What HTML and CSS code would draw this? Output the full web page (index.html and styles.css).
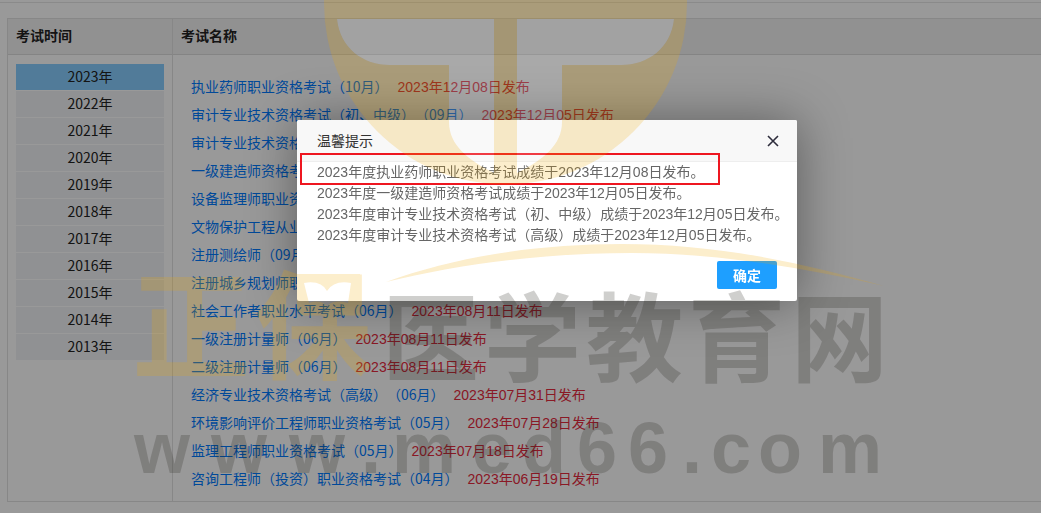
FILE: index.html
```html
<!DOCTYPE html>
<html lang="zh-CN">
<head>
<meta charset="utf-8">
<title>考试成绩发布</title>
<link rel="stylesheet" href="styles.css">
</head>
<body>
<main class="page">
  <table class="exams">
    <thead>
      <tr><th class="col-year" scope="col">考试时间</th><th scope="col">考试名称</th></tr>
    </thead>
    <tbody>
      <tr>
        <td class="year-cell">
          <nav class="years">
            <a class="year active" href="#2023">2023年</a>
            <a class="year" href="#2022">2022年</a>
            <a class="year" href="#2021">2021年</a>
            <a class="year" href="#2020">2020年</a>
            <a class="year" href="#2019">2019年</a>
            <a class="year" href="#2018">2018年</a>
            <a class="year" href="#2017">2017年</a>
            <a class="year" href="#2016">2016年</a>
            <a class="year" href="#2015">2015年</a>
            <a class="year" href="#2014">2014年</a>
            <a class="year" href="#2013">2013年</a>
          </nav>
        </td>
        <td class="name-cell">
          <ul class="names">
            <li><a href="#e1">执业药师职业资格考试（10月）</a><span class="date">2023年12月08日发布</span></li>
            <li><a href="#e2">审计专业技术资格考试（初、中级）（09月）</a><span class="date">2023年12月05日发布</span></li>
            <li><a href="#e3">审计专业技术资格考试（高级）（09月）</a></li>
            <li><a href="#e4">一级建造师资格考试（09月）</a></li>
            <li><a href="#e5">设备监理师职业资格考试（09月）</a></li>
            <li><a href="#e6">文物保护工程从业资格考试（09月）</a></li>
            <li><a href="#e7">注册测绘师（09月）</a></li>
            <li><a href="#e8">注册城乡规划师职业资格考试（09月）</a></li>
            <li><a href="#e9">社会工作者职业水平考试（06月）</a><span class="date">2023年08月11日发布</span></li>
            <li><a href="#e10">一级注册计量师（06月）</a><span class="date">2023年08月11日发布</span></li>
            <li><a href="#e11">二级注册计量师（06月）</a><span class="date">2023年08月11日发布</span></li>
            <li><a href="#e12">经济专业技术资格考试（高级）（06月）</a><span class="date">2023年07月31日发布</span></li>
            <li><a href="#e13">环境影响评价工程师职业资格考试（05月）</a><span class="date">2023年07月28日发布</span></li>
            <li><a href="#e14">监理工程师职业资格考试（05月）</a><span class="date">2023年07月18日发布</span></li>
            <li><a href="#e15">咨询工程师（投资）职业资格考试（04月）</a><span class="date">2023年06月19日发布</span></li>
          </ul>
        </td>
      </tr>
    </tbody>
  </table>
</main>

<div class="shade"></div>

<section class="dialog" role="dialog" aria-labelledby="dialog-title">
  <header class="dialog-head">
    <h2 class="dialog-title" id="dialog-title">温馨提示</h2>
    <button class="close" type="button" aria-label="关闭">
      <svg width="12" height="12" viewBox="0 0 12 12"><path d="M1 1l10 10M11 1L1 11" stroke="#2e2d3c" stroke-width="1.6" fill="none"/></svg>
    </button>
  </header>
  <div class="dialog-body">
    <p>2023年度执业药师职业资格考试成绩于2023年12月08日发布。</p>
    <p>2023年度一级建造师资格考试成绩于2023年12月05日发布。</p>
    <p>2023年度审计专业技术资格考试（初、中级）成绩于2023年12月05日发布。</p>
    <p>2023年度审计专业技术资格考试（高级）成绩于2023年12月05日发布。</p>
  </div>
  <footer class="dialog-foot"><button class="confirm" type="button">确定</button></footer>
  <div class="highlight"></div>
</section>

<svg class="watermark" width="1041" height="513" viewBox="0 0 1041 513">
  <defs>
    <mask id="book" maskUnits="userSpaceOnUse" x="0" y="0" width="1041" height="513">
      <rect width="1041" height="513" fill="#fff"/>
      <path d="M304 283Q321 280 327 291Q334 280 351 283L348 303Q334 299 327 306Q320 299 309 303Z" fill="#000"/>
    </mask>
  </defs>
  <g class="wm-light">
    <path d="M337 19H494V173C468 160 449 145 449 122V65H390C363 65 340 48 337 19Z"/>
    <path d="M674 19H517V173C543 160 562 145 562 122V65H621C648 65 671 48 674 19Z"/>
  </g>
  <g class="wm-gold">
    <path fill-rule="evenodd" d="M324 3A181.500 181.500 0 0 0 687 3V-2H324ZM337 19H494V173C468 160 449 145 449 122V65H390C363 65 340 48 337 19ZM674 19H517V173C543 160 562 145 562 122V65H621C648 65 671 48 674 19Z"/>
    <path d="M386 282C455 257 535 244 622 244C715 244 800 262 884 286C800 267 715 253 632 253C540 253 455 265 386 282Z"/>
    <g mask="url(#book)">
      <text class="wm-brand" x="132 254" y="370">正保</text>
      <path d="M297 274H360V312H297Z"/>
    </g>
  </g>
  <g class="wm-dark">
    <text class="wm-name" x="382 484 586 688 791" y="374">医学教育网</text>
    <text class="wm-site" x="134 211 289 361 392 472 522 577 628 682 711 758 818" y="473">www.med66.com</text>
  </g>
</svg>
</body>
</html>
```
FILE: styles.css
```css
* { box-sizing: border-box; }
body {
  margin: 0;
  overflow: hidden;
  background: #fff;
  color: #222;
  font: 14px/20px "Liberation Sans", "Noto Sans CJK SC", sans-serif;
  text-spacing-trim: space-all;
}
a { text-decoration: none; }
.page {
  margin-top: 2px;
  border-top: 1px solid #e6e6e6;
  padding: 15px 0 11px 7px;
}
.exams {
  width: 100%;
  border: 1px solid #e2e2e2;
  border-right: 0;
  border-spacing: 0;
  table-layout: fixed;
}
.exams th {
  height: 36px;
  padding: 0 8px 2px;
  background: #f2f2f2;
  border-bottom: 1px solid #ddd;
  text-align: left;
  font-weight: 700;
}
.exams .col-year { width: 164px; }
.exams th + th, .exams td + td { border-left: 1px solid #e2e2e2; }
.exams td { padding: 0; vertical-align: top; }
.exams .year-cell { padding: 9px 8px; }
.exams .name-cell { padding: 18px 18px 8px; }
.years { display: flex; flex-direction: column; gap: 1px; }
.year {
  padding-bottom: 2px;
  background: #f0f2f5;
  color: #222;
  font-family: "Noto Sans CJK SC", sans-serif;
  line-height: 24px;
  text-align: center;
}
.year.active { background: #87ceff; }
.names { margin: 0; padding: 0; list-style: none; }
.names li { display: flex; gap: 9px; height: 28px; line-height: 28px; white-space: nowrap; }
.names a { color: #007bff; font-family: "Noto Sans CJK SC", sans-serif; line-height: 26px; }
.date { color: #e62a3e; }
.shade { position: fixed; inset: 0; background: rgba(0, 0, 0, .4); }
.dialog {
  position: absolute;
  top: 120px;
  left: 297px;
  width: 500px;
  background: #fff;
  border-radius: 2px;
  box-shadow: 1px 1px 50px rgba(0, 0, 0, .4);
}
.dialog-head {
  display: flex;
  align-items: center;
  justify-content: space-between;
  height: 42px;
  padding: 0 18px 0 20px;
  background: #f8f8f8;
  border-bottom: 1px solid #eee;
  border-radius: 2px 2px 0 0;
}
.dialog-title { margin: 0; color: #333; font-size: 14px; font-weight: 400; }
.close { display: flex; padding: 0; border: 0; background: none; }
.dialog-body { padding: 0 0 15px 20px; color: #666; line-height: 21px; white-space: nowrap; }
.dialog-body p { margin: 0; }
.dialog-foot { display: flex; justify-content: flex-end; padding: 0 20px 12px; }
.confirm {
  width: 60px;
  height: 28px;
  padding: 0;
  border: 0;
  border-radius: 2px;
  background: #1e9fff;
  color: #fff;
  font: 700 14px/28px "Noto Sans CJK SC", sans-serif;
}
.highlight {
  position: absolute;
  top: 33px;
  left: 3px;
  width: 420px;
  height: 32px;
  border: 2px solid #ee1620;
}
.watermark { position: absolute; top: 0; left: 0; pointer-events: none; }
.wm-light { fill: #fff; opacity: .16; }
.wm-gold { fill: #f0a800; opacity: .2; }
.wm-dark { fill: #28241f; opacity: .22; }
.wm-brand { font: 700 118px "Noto Sans CJK SC", sans-serif; }
.wm-name { font: 700 97px "Noto Sans CJK SC", sans-serif; }
.wm-site { font: 700 72px "Liberation Sans", sans-serif; }
```
